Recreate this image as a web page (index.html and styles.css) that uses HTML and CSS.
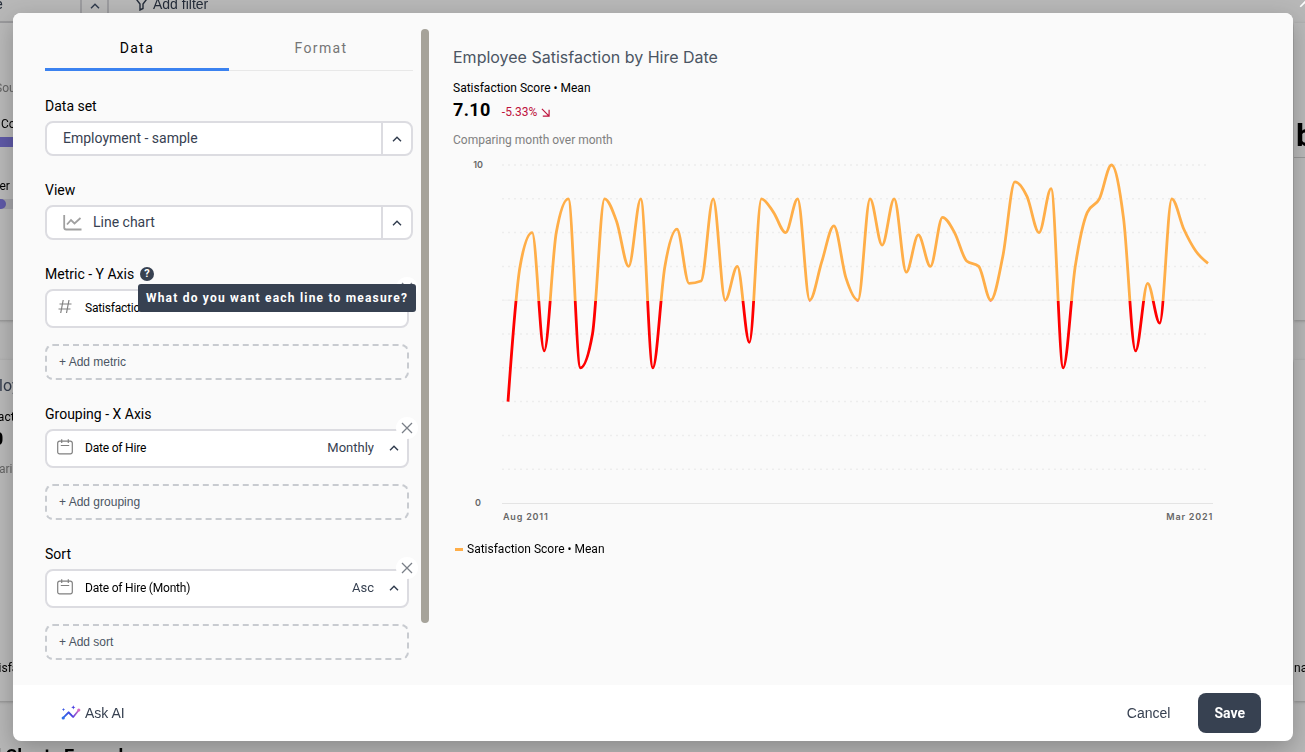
FILE: index.html
```html
<!DOCTYPE html>
<html lang="en">
<head>
<meta charset="utf-8">
<title>Employee Satisfaction by Hire Date</title>
<link rel="stylesheet" href="styles.css">
</head>
<body>
<svg class="sprite" aria-hidden="true">
  <symbol id="chevron" viewBox="0 0 10 6"><path d="M1 5.2 5 1.2l4 4" fill="none" stroke="currentColor" stroke-width="1.4"/></symbol>
  <symbol id="close" viewBox="0 0 12 12"><path d="M1 1l10 10M11 1 1 11" fill="none" stroke="currentColor" stroke-width="1.3"/></symbol>
  <symbol id="calendar" viewBox="0 0 16 16"><path d="M2.500 2.200h11a1.800 1.800 0 0 1 1.800 1.800v9a1.800 1.800 0 0 1-1.800 1.800H2.500A1.800 1.800 0 0 1 .700 13V4a1.800 1.800 0 0 1 1.800-1.800zM4.700.2v3.800M11.300.2v3.800M3.800 6.500h8.400" fill="none" stroke="currentColor" stroke-width="1.2"/></symbol>
</svg>

<div class="dashboard" aria-hidden="true">
  <div class="toolbar">
    <span class="toolbar-select"><span>Employee</span><span class="toolbar-arrow"><svg class="chevron"><use href="#chevron"/></svg></span></span>
    <span class="toolbar-filter"><svg width="15" height="15" viewBox="0 0 15 15"><path d="M1 1.500h13L9 8v4.500l-3 1.500V8z" fill="none" stroke="currentColor" stroke-width="1.400"/></svg>Add filter</span>
    <svg class="toolbar-close"><use href="#close"/></svg>
  </div>
  <div class="dash-columns">
    <div class="dash-left">
      <section class="card card-top">
        <p class="muted source">Source</p>
        <p class="country">Country</p>
        <div class="bar bar-full"></div>
        <p class="counter">Number •</p>
        <div class="bar bar-track"><div class="bar bar-part"></div></div>
      </section>
      <section class="card card-low">
        <h2>Employee</h2>
        <p>Satisfaction</p>
        <strong>7.10</strong>
        <p class="muted">Comparing</p>
        <p class="card-legend">Satisfaction</p>
      </section>
    </div>
    <div class="dash-right">
      <section class="card card-top"><span class="big">by</span></section>
      <section class="card card-low"><p class="manager">nager</p></section>
    </div>
  </div>
  <h2 class="dash-heading">d Charts Example</h2>
</div>

<div class="modal" role="dialog" aria-label="Edit chart">
  <div class="modal-body">
    <div class="settings">
      <form class="settings-form">
        <div class="tabs" role="tablist">
          <button type="button" class="tab tab-active" role="tab" aria-selected="true">Data</button>
          <button type="button" class="tab" role="tab" aria-selected="false">Format</button>
        </div>
        <div class="fields">
          <div class="field">
            <label for="dataset">Data set</label>
            <div class="select-box">
              <select id="dataset"><option>Employment - sample</option></select>
              <span class="select-arrow"><svg class="chevron"><use href="#chevron"/></svg></span>
            </div>
          </div>
          <div class="field">
            <label for="view">View</label>
            <div class="select-box">
              <svg class="view-icon" viewBox="0 0 19 16"><path d="M1.200 0v12.500a2 2 0 0 0 2 2H18.500" fill="none" stroke="currentColor" stroke-width="1.800"/><path d="M4 9.500 8 5l3.500 3.500L17.500 3" fill="none" stroke="currentColor" stroke-width="1.800"/></svg>
              <select id="view"><option>Line chart</option></select>
              <span class="select-arrow"><svg class="chevron"><use href="#chevron"/></svg></span>
            </div>
          </div>
          <div class="field">
            <div class="label-row">
              <label for="metric">Metric - Y Axis</label>
              <button type="button" class="help" aria-describedby="metric-tip">?</button>
              <span class="tooltip" role="tooltip" id="metric-tip">What do you want each line to measure?</span>
            </div>
            <div class="item">
              <svg class="item-icon" viewBox="0 0 16 16"><path d="M6.200 1 3.700 14M12 1 9.500 14M2.500 5h12M1.500 10h12" fill="none" stroke="currentColor" stroke-width="1.200"/></svg>
              <span class="item-name">Satisfaction Score</span>
              <select id="metric"><option>Mean</option></select>
              <svg class="chevron"><use href="#chevron"/></svg>
              <button type="button" class="remove" aria-label="Remove metric"><svg><use href="#close"/></svg></button>
            </div>
            <button type="button" class="add">+ Add metric</button>
          </div>
          <div class="field">
            <label for="grouping">Grouping - X Axis</label>
            <div class="item">
              <svg class="item-icon"><use href="#calendar"/></svg>
              <span class="item-name">Date of Hire</span>
              <select id="grouping"><option>Monthly</option></select>
              <svg class="chevron"><use href="#chevron"/></svg>
              <button type="button" class="remove" aria-label="Remove grouping"><svg><use href="#close"/></svg></button>
            </div>
            <button type="button" class="add">+ Add grouping</button>
          </div>
          <div class="field">
            <label for="sort">Sort</label>
            <div class="item">
              <svg class="item-icon"><use href="#calendar"/></svg>
              <span class="item-name">Date of Hire (Month)</span>
              <select id="sort"><option>Asc</option></select>
              <svg class="chevron"><use href="#chevron"/></svg>
              <button type="button" class="remove" aria-label="Remove sort"><svg><use href="#close"/></svg></button>
            </div>
            <button type="button" class="add">+ Add sort</button>
          </div>
        </div>
      </form>
      <div class="scroll-track"><div class="scroll-thumb"></div></div>
    </div>

    <section class="preview">
      <h1>Employee Satisfaction by Hire Date</h1>
      <p class="series">Satisfaction Score • Mean</p>
      <div class="figures">
        <strong>7.10</strong>
        <span class="delta">-5.33%<svg viewBox="0 0 10 10"><path d="M1 1l8 8M9 2v7H2" fill="none" stroke="currentColor" stroke-width="1.300"/></svg></span>
      </div>
      <p class="compare">Comparing month over month</p>
      <svg class="chart" viewBox="0 0 808 370" role="img" aria-label="Satisfaction Score by month">
        <defs>
          <linearGradient id="threshold" gradientUnits="userSpaceOnUse" x1="0" y1="0" x2="0" y2="370">
            <stop offset="0.394" stop-color="#ffae48"/>
            <stop offset="0.394" stop-color="#ff0000"/>
          </linearGradient>
        </defs>
        <g id="grid"></g>
        <path id="line" fill="none" stroke="url(#threshold)" stroke-width="2.800" stroke-linecap="butt" stroke-linejoin="round"/>
        <text x="30" y="13" text-anchor="end">10</text>
        <text x="28" y="351" text-anchor="end">0</text>
        <text class="date" x="50" y="365">Aug 2011</text>
        <text class="date" x="760" y="365" text-anchor="end">Mar 2021</text>
      </svg>
      <p class="legend"><span class="legend-key"></span>Satisfaction Score • Mean</p>
    </section>
  </div>

  <footer class="modal-footer">
    <button type="button" class="ask">
      <svg viewBox="0 0 20 16"><defs><linearGradient id="spark" x1="0" x2="1"><stop offset="0" stop-color="#2f6fe8"/><stop offset="0.550" stop-color="#4a3fe0"/><stop offset="1" stop-color="#e56cc0"/></linearGradient></defs>
        <g fill="url(#spark)"><path d="M1.500 12.200 6.900 6.800a1 1 0 0 1 1.500 0l3.800 4 5.300-6.500 1.300 1-5.900 7.300a1 1 0 0 1-1.500 0L7.600 8.700l-4.900 4.900z"/></g>
        <circle cx="2.200" cy="13" r="1.600" fill="#2f6fe8"/><circle cx="17.800" cy="5" r="1.600" fill="#d768c4"/>
        <path d="M12.300.2l.6 1.500 1.500.6-1.500.6-.6 1.500-.6-1.500-1.500-.6 1.500-.6z" fill="#4a3fe0"/><path d="M2.500 3l.5 1.100 1.100.5-1.100.5-.5 1.100-.5-1.100L.9 4.600 2 4.100z" fill="#3c58e4"/></svg>
      Ask AI
    </button>
    <div class="actions">
      <button type="button" class="cancel">Cancel</button>
      <button type="button" class="save">Save</button>
    </div>
  </footer>
</div>
<script src="chart.js"></script>
</body>
</html>
```

FILE: styles.css
```css
* { box-sizing: border-box; }
body {
  margin: 0;
  height: 100vh;
  overflow: hidden;
  background: #b8b8b8;
  color: #000;
  font-family: Roboto, "Liberation Sans", sans-serif;
  font-size: 14px;
  line-height: 20px;
}
h1, h2, p { margin: 0; font-weight: 400; }
button, select { font: inherit; color: inherit; border: 0; background: none; padding: 0; margin: 0; }
select { appearance: none; outline: none; }
.sprite { position: absolute; width: 0; height: 0; }
.chevron { width: 10px; height: 6px; flex: none; color: #2f3a4c; }

/* Dashboard under the dialog */
.dashboard { position: fixed; inset: 0; overflow: hidden; display: flex; flex-direction: column; }
.toolbar { display: flex; flex: none; gap: 25px; height: 23px; color: #242c39; }
.toolbar-select { display: flex; align-items: flex-start; width: 169px; margin-left: -60px; border: 2px solid #9c9c9f; border-top: 0; line-height: 8px; }
.toolbar-select > span:first-child { flex: 1; }
.toolbar-arrow { align-self: stretch; width: 27px; border-left: 2px solid #9c9c9f; text-align: center; }
.toolbar-filter { display: flex; align-items: flex-start; gap: 4px; line-height: 8px; height: 12px; font-family: "Liberation Sans", Arial, sans-serif; }
.toolbar-filter svg { margin-top: -4px; }
.toolbar-close { width: 15px; height: 15px; margin: -7px -9px 0 auto; color: #fff; }
.dash-columns { display: flex; flex: none; justify-content: space-between; }
.dash-left { width: 200px; margin-left: -49px; }
.dash-right { width: 60px; margin-right: -49px; }
.card { background: #bababa; box-shadow: 0 1px 3px #8c8c8c; padding-left: 16px; font-size: 12px; line-height: 18px; }
.card-top { height: 297px; margin-bottom: 40px; padding-top: 56px; }
.card-low { height: 341px; padding-top: 14px; }
.muted { color: #666; }
.source { padding-left: 28px; }
.country { padding: 18px 0 4px 34px; }
.counter { padding: 30px 0 4px 0; }
.bar { height: 10px; }
.bar-full { background: #5f5aa8; }
.bar-track { background: #a6a6aa; }
.bar-part { width: 39px; border-radius: 0 5px 5px 0; background: #5f5aa8; }
.card-low h2 { font-size: 16px; line-height: 24px; margin-bottom: 10px; color: #333c4c; }
.card-low strong { display: block; font-size: 18px; line-height: 26px; margin-bottom: 8px; }
.card-legend { padding: 181px 0 0 14px; }
.dash-right .card-top { padding: 0; }
.dash-right .card-low { padding: 299px 0 0; }
.big { display: block; height: 135px; padding: 96px 0 0 2px; border-bottom: 1px solid #999; font-size: 32px; line-height: 32px; font-weight: 700; }
.dash-heading { flex: none; margin: 42px 0 0 -9px; font-size: 18px; line-height: 26px; font-weight: 700; }

/* Dialog */
.modal {
  position: fixed;
  inset: 13px 12px 11px 13px;
  display: flex;
  flex-direction: column;
  overflow: hidden;
  border-radius: 8px;
  background: #fff;
  box-shadow: 0 8px 24px rgba(0, 0, 0, 0.250);
}
.modal-body { flex: 1; display: flex; min-height: 0; background: #fafafa; }
.settings { display: flex; width: 416px; flex: none; padding: 16px 0 0 32px; gap: 8px; }
.settings-form { flex: 1; }
.scroll-track { width: 8px; }
.scroll-thumb { height: 90.500%; border-radius: 4px; background: #a6a39a; }

.tabs { display: flex; height: 42px; box-shadow: inset 0 -1px #e8e8e8; }
.tab { flex: 1; padding-bottom: 2px; font-size: 14px; letter-spacing: 1.400px; color: #757575; border-bottom: 3px solid transparent; }
.tab-active { color: #000; border-color: #3b82f0; }

.fields { display: flex; flex-direction: column; gap: 24px; padding-top: 25px; }
.field { display: flex; flex-direction: column; }
.field > label, .label-row { margin-bottom: 5px; line-height: 20px; }
.label-row { position: relative; display: flex; align-items: center; gap: 6px; }
.help { width: 14px; height: 14px; border-radius: 50%; background: #374151; color: #fff; font-size: 11px; font-weight: 700; line-height: 14px; }
.tooltip {
  position: absolute;
  z-index: 2;
  left: 93px;
  top: 20px;
  height: 28px;
  padding: 0 8px;
  border-radius: 3px;
  background: #374151;
  color: #fff;
  font-size: 12px;
  font-weight: 700;
  line-height: 28px;
  letter-spacing: 1.200px;
  white-space: nowrap;
}
.select-box { display: flex; align-items: center; height: 35px; border: 2px solid #dcdce1; border-radius: 8px; background: #fff; color: #374151; }
.select-box select { flex: 1; align-self: stretch; padding: 0 0 2px 16px; }
.view-icon { width: 19px; height: 16px; margin-left: 16px; color: #a0a0a0; }
.view-icon + select { padding-left: 11px; }
.select-arrow { display: flex; align-items: center; justify-content: center; align-self: stretch; width: 30px; border-left: 2px solid #dcdce1; }

.item { position: relative; display: flex; align-items: center; height: 39px; margin: 0 4px 16px 0; padding: 0 8px 2px 10px; border: 2px solid #dcdce1; border-radius: 8px; background: #fff; }
.item-icon { width: 16px; height: 16px; margin: 0 12px 2px 0; color: #808080; }
.item-name { flex: 1; font-size: 12px; letter-spacing: -0.200px; }
.item select { margin-right: 15px; font-size: 13px; text-align-last: right; color: #374151; }
.remove { position: absolute; top: -14px; right: -11px; display: flex; align-items: center; justify-content: center; width: 22px; height: 22px; border-radius: 50%; background: #fff; color: #7a7f88; }
.remove svg { width: 12px; height: 12px; }
.add { height: 36px; margin-right: 4px; padding: 0 12px; border: 2px dashed #c8cbd0; border-radius: 8px; text-align: left; font-family: "Liberation Sans", Arial, sans-serif; font-size: 12px; color: #4b5563; }

/* Chart preview */
.preview { flex: 1; min-width: 0; padding: 32px 32px 0 24px; font-size: 12px; line-height: 18px; }
.preview h1 { margin-bottom: 10px; font-family: Inter, sans-serif; font-size: 16px; line-height: 24px; color: #4b5563; }
.figures { display: flex; align-items: center; gap: 11px; margin-bottom: 8px; line-height: 26px; }
.figures strong { font-size: 18px; letter-spacing: 0.400px; }
.delta { display: flex; align-items: center; gap: 4px; padding-top: 4px; line-height: 22px; color: #be123c; }
.delta svg { width: 9px; height: 9px; }
.compare { margin-bottom: 6px; color: #808080; }
.chart { display: block; width: 100%; }
.chart text { font-family: Inter, sans-serif; font-size: 9px; font-weight: 600; fill: #666; }
.chart .date { letter-spacing: 0.800px; }
.legend { display: flex; align-items: center; gap: 4px; padding-left: 2px; margin-top: 15px; }
.legend-key { width: 8px; height: 3px; background: #ffae48; }

/* Footer */
.modal-footer { display: flex; align-items: center; justify-content: space-between; height: 56px; padding: 0 32px 0 48px; color: #374151; font-family: "Liberation Sans", Arial, sans-serif; }
.ask { display: flex; align-items: center; gap: 4px; }
.ask svg { width: 20px; height: 16px; }
.actions { display: flex; align-items: center; gap: 28px; }
.save { height: 40px; padding: 0 16px; border-radius: 8px; background: #374151; color: #fff; font-family: Roboto, sans-serif; font-weight: 700; }
```

FILE: chart.js
```js
// Monthly means, drawn with a monotone cubic line.
const values = [3, 7, 8, 4.5, 8, 9, 4, 5, 9, 8.33, 7, 9, 4, 7, 8.1, 6.5, 6.57, 9, 6, 7, 4.75,
  9, 8.6, 8, 9, 6, 7.14, 8.2, 6.66, 6, 9, 7.63, 9, 6.83, 7.93, 7, 8.45, 8, 7.16, 7, 6, 7.3,
  9.5, 9.07, 8, 9.3, 4, 7, 8.6, 9, 10, 8.43, 4.5, 6.5, 5.32, 9, 8.1, 7.45, 7.09];
const left = 55, right = 755, top10 = 10, bottom0 = 348;
const step = (right - left) / (values.length - 1);
const y = v => bottom0 - v * (bottom0 - top10) / 10;
const pts = values.map((v, i) => [left + i * step, y(v)]);
const slope = i => (pts[i + 1][1] - pts[i][1]) / step;
const tangents = pts.map((p, i) => {
  if (i === 0 || i === pts.length - 1) return null;
  const a = slope(i - 1), b = slope(i);
  return (Math.sign(a) + Math.sign(b)) * Math.min(Math.abs(a), Math.abs(b), Math.abs(a + b) / 4);
});
const last = pts.length - 1;
tangents[0] = (3 * slope(0) - tangents[1]) / 2;
tangents[last] = (3 * slope(last - 1) - tangents[last - 1]) / 2;
let d = `M${pts[0]}`;
for (let i = 0; i < last; i++) {
  const [x0, y0] = pts[i], [x1, y1] = pts[i + 1], k = step / 3;
  d += `C${x0 + k},${y0 + k * tangents[i]} ${x1 - k},${y1 - k * tangents[i + 1]} ${x1},${y1}`;
}
document.getElementById('line').setAttribute('d', d);

let grid = '';
for (let v = 1; v <= 10; v++) {
  grid += `<path d="M49 ${y(v)}H756" stroke="#ededed" stroke-width="1.5" stroke-dasharray="2 4"/>`;
}
grid += `<path d="M49 ${y(6)}H760" stroke="#f0f0f0"/><path d="M49 ${bottom0 + 0.5}H760" stroke="#e4e4e4"/>`;
document.getElementById('grid').innerHTML = grid;
```
